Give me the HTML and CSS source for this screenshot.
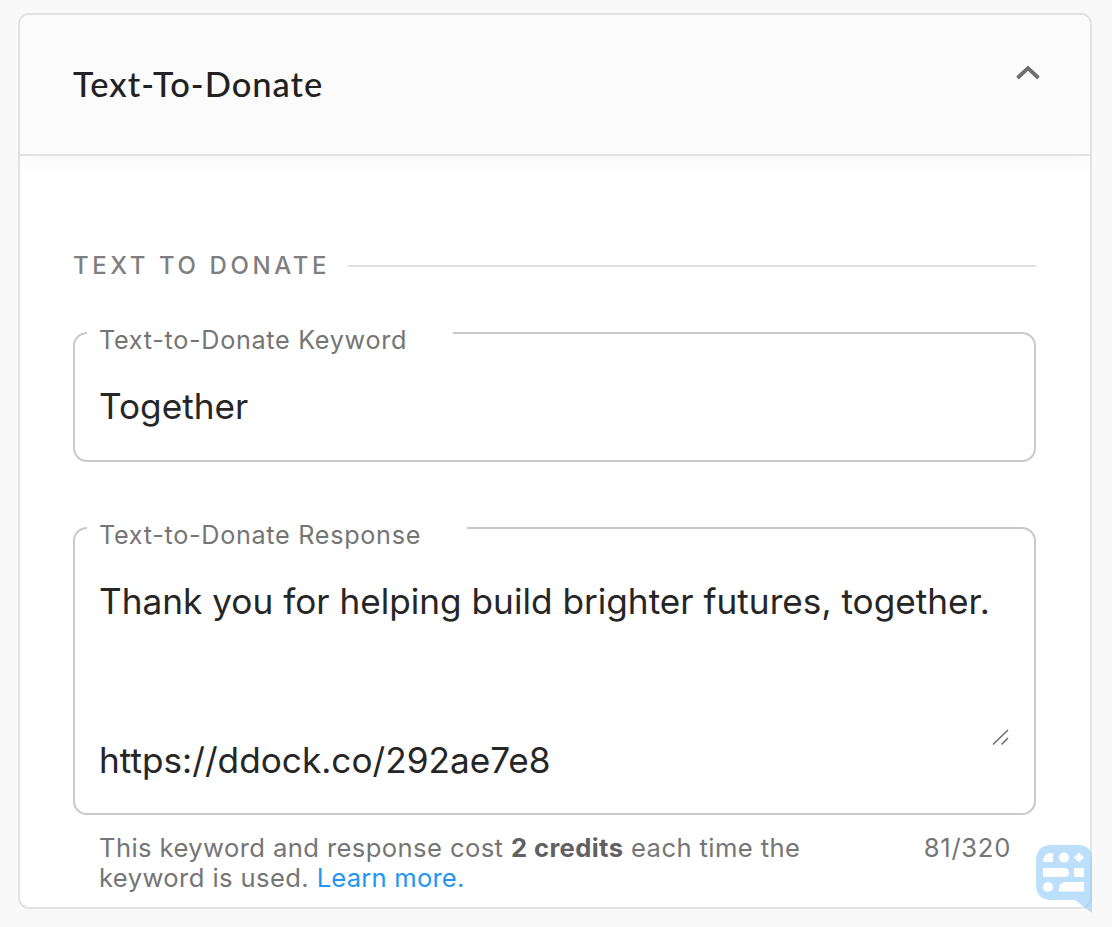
FILE: index.html
```html
<!DOCTYPE html>
<html lang="en">
<head>
    <meta charset="UTF-8">
    <meta name="viewport" content="width=device-width, initial-scale=1.0">
    <title>Text-To-Donate</title>
    <link rel="stylesheet" href="styles.css">
</head>
<body>
    <section class="card">
        <header class="card-header">
            <h2>Text-To-Donate</h2>
            <svg class="chevron" width="26" height="16" viewBox="0 0 26 16" aria-hidden="true">
                <path d="M2.5 13 L13 3 L23.5 13" fill="none" stroke="#6f6f6f" stroke-width="3.8"/>
            </svg>
        </header>
        <div class="card-body">
            <div class="section-title">
                <span>TEXT TO DONATE</span>
                <div class="section-rule"></div>
            </div>

            <fieldset class="field field-keyword">
                <legend>Text-to-Donate Keyword</legend>
                <div class="field-value">Together</div>
            </fieldset>

            <fieldset class="field field-response">
                <legend>Text-to-Donate Response</legend>
                <div class="field-value">Thank you for helping build brighter futures, together.</div>
                <div class="field-value field-link">https://ddock.co/292ae7e8</div>
                <svg class="grip" width="18" height="18" viewBox="0 0 18 18" aria-hidden="true">
                    <path d="M1 16.5 L16 2 M9.5 16.5 L16 10" fill="none" stroke="#6a6a6a" stroke-width="1.5"/>
                </svg>
            </fieldset>

            <div class="field-help">
                <p>This keyword and response cost <strong>2 credits</strong> each time the keyword is used. <a href="#">Learn more.</a></p>
                <span class="counter">81/320</span>
            </div>
        </div>
    </section>

    <svg class="chat-widget" width="56" height="68" viewBox="0 0 56 68" aria-hidden="true">
        <path d="M16 0 H42 Q56 0 56 14 V68 L39 55 H16 Q0 55 0 39 V16 Q0 0 16 0 Z" fill="#90caf9" fill-opacity="0.6"/>
        <path d="M7 17 Q7 8 16 8 H17 V17 Z M38 12.5 L43 7.5 L48 12.5 L43 17.5 Z" fill="#fff"/>
        <circle cx="28" cy="12.5" r="5" fill="#fff"/>
        <path d="M7 23 H28 Q33 23 33 27.5 Q33 32 28 32 H7 Z M38 23 H48 V32 H38 Z" fill="#fff"/>
        <circle cx="12" cy="42" r="5" fill="#fff"/>
        <path d="M23 46.5 V44 Q23 37 30 37 H48 V46.5 Z" fill="#fff"/>
    </svg>
</body>
</html>
```

FILE: styles.css
```css
body {
    margin: 0;
    height: 927px;
    overflow: hidden;
    padding: 13px 20px 0 18px;
    box-sizing: border-box;
    background-color: #f9f9f9;
    font-family: Inter, "Liberation Sans", sans-serif;
    color: #212121;
}
.card {
    height: 896px;
    box-sizing: border-box;
    background-color: #fff;
    border: 2px solid #e2e2e2;
    border-radius: 11px;
    overflow: hidden;
}
.card-header {
    display: flex;
    justify-content: space-between;
    height: 139px;
    padding: 0 49px 0 53px;
    background-color: #fbfbfb;
    border-bottom: 2px solid #e2e2e2;
    box-shadow: 0 6px 20px rgba(0, 0, 0, 0.04);
}
.card-header h2 {
    margin: 50px 0 0;
    font-family: Lato, sans-serif;
    font-size: 34.5px;
    line-height: 38px;
    font-weight: 500;
    letter-spacing: 1px;
}
.chevron {
    margin-top: 50px;
}
.card-body {
    padding: 95px 54px 0 53px;
}
.section-title {
    display: flex;
    align-items: center;
    gap: 18px;
    font-size: 24px;
    line-height: 30px;
    font-weight: 500;
    letter-spacing: 3.6px;
    color: #7f7f7f;
}
.section-rule {
    flex: 1;
    height: 2px;
    background-color: #e0e0e0;
}
.field {
    position: relative;
    margin: 0;
    padding: 0 24px;
    box-sizing: border-box;
    border: 2px solid #c9c9c9;
    border-radius: 14px;
}
/* top padding pushes the label below the border line */
.field legend {
    padding: 14px 46px 0 12px;
    margin-left: -12px;
    font-size: 25.2px;
    line-height: 30px;
    letter-spacing: 0.7px;
    color: #757575;
}
.field-keyword {
    margin-top: 30px;
    height: 151px;
}
.field-response {
    margin-top: 44px;
    height: 309px;
}
.field-value {
    margin-top: 25px;
    font-size: 35.2px;
    line-height: 53px;
    color: #262626;
}
.field-response .field-link {
    margin-top: 106px;
}
.grip {
    position: absolute;
    right: 24px;
    top: 178px;
}
.field-help {
    display: flex;
    justify-content: space-between;
    gap: 40px;
    padding: 18px 25px 0 26px;
    font-size: 25.6px;
    line-height: 30px;
    letter-spacing: 0.4px;
    color: #757575;
}
.field-help p {
    margin: 0;
    max-width: 740px;
}
.field-help strong {
    font-weight: 700;
    color: #616161;
}
.field-help a {
    color: #2196f3;
    text-decoration: none;
    letter-spacing: 0.2px;
}
.counter {
    letter-spacing: 0.7px;
}
.chat-widget {
    position: absolute;
    left: 1036px;
    top: 845px;
}
```
